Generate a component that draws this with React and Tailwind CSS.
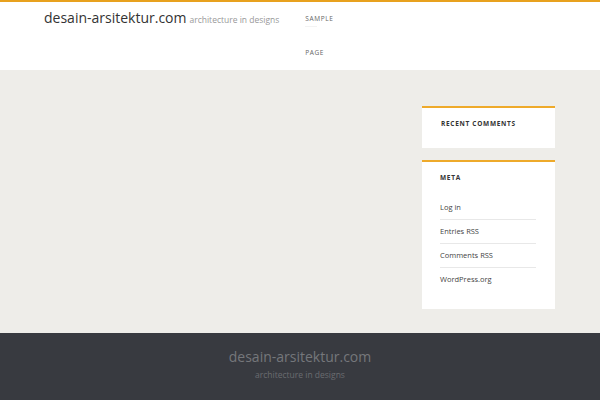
export default function App() {
  const links = ["Log in", "Entries RSS", "Comments RSS", "WordPress.org"];
  return (
    <div className="w-[600px] h-[400px] flex flex-col bg-[#eeede9] overflow-hidden" style={{ fontFamily: '"Open Sans", sans-serif' }}>
      <header className="h-[70px] bg-white border-t-2 border-[#e8a11e] flex shrink-0">
        <div className="pl-[44px] pt-[5px] flex items-baseline h-fit">
          <span className="text-[14px] text-[#333] leading-[22px]">desain-arsitektur.com</span>
          <span className="ml-[3px] text-[8.5px] text-[#999]">architecture in designs</span>
        </div>
        <nav className="ml-[26px] pt-[12px] flex flex-col w-[40px]">
          <span className="text-[6.5px] tracking-[0.6px] text-[#666] leading-[10px]">SAMPLE</span>
          <span className="mt-[2px] w-[12px] border-t border-[#f3f3f3]"></span>
          <span className="mt-[21px] text-[6.5px] tracking-[0.6px] text-[#666] leading-[10px]">PAGE</span>
        </nav>
      </header>
      <main className="flex-1 flex justify-end pr-[45px] pt-[36px]">
        <aside className="w-[133px] flex flex-col gap-[12px]">
          <section className="bg-white border-t-2 border-[#eeaa2b] h-[42px] pl-[19px] pt-[11px]">
            <h3 className="text-[6.5px] font-bold tracking-[0.7px] text-[#333] leading-[10px]">RECENT COMMENTS</h3>
          </section>
          <section className="bg-white border-t-2 border-[#eeaa2b] h-[149px] pl-[18px] pr-[19px] pt-[11px]">
            <h3 className="text-[6.5px] font-bold tracking-[0.7px] text-[#333] leading-[10px]">META</h3>
            <ul className="mt-[13px] flex flex-col">
              {links.map((l, i) => (
                <li key={l} className={`text-[7.5px] text-[#444] leading-[10px] pb-[7px] pt-[6px] ${i < links.length - 1 ? "border-b border-[#e8e8e8]" : ""}`}>{l}</li>
              ))}
            </ul>
          </section>
        </aside>
      </main>
      <footer className="h-[67px] bg-[#383a40] flex flex-col items-center pt-[14px] shrink-0">
        <span className="text-[14px] text-[#75777b] leading-[20px]">desain-arsitektur.com</span>
        <span className="text-[8.5px] text-[#6a6c70] leading-[12px] mt-[2px]">architecture in designs</span>
      </footer>
    </div>
  );
}
